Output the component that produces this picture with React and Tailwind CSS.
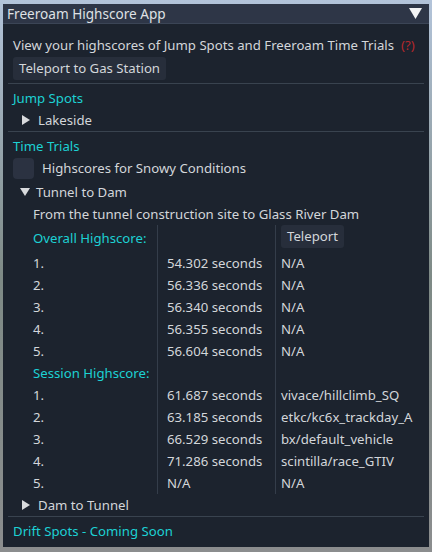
const overall = [
  ['1.', '54.302 seconds', 'N/A'],
  ['2.', '56.336 seconds', 'N/A'],
  ['3.', '56.340 seconds', 'N/A'],
  ['4.', '56.355 seconds', 'N/A'],
  ['5.', '56.604 seconds', 'N/A'],
];

const session = [
  ['1.', '61.687 seconds', 'vivace/hillclimb_SQ'],
  ['2.', '63.185 seconds', 'etkc/kc6x_trackday_A'],
  ['3.', '66.529 seconds', 'bx/default_vehicle'],
  ['4.', '71.286 seconds', 'scintilla/race_GTIV'],
  ['5.', 'N/A', 'N/A'],
];

// the extra top padding nudges the glyphs 1px down so they sit centred like the game's font
function T({ className = '', children }) {
  return <span className={'pt-[2px] ' + className}>{children}</span>;
}

function Arrow({ open }) {
  return (
    <svg width="10" height="10" viewBox="0 0 10 10" className="shrink-0">
      {open ? <polygon points="0,1 10,1 5,9" fill="#d8dadd" /> : <polygon points="1,0 9,5 1,10" fill="#d8dadd" />}
    </svg>
  );
}

function Separator() {
  return <div className="h-px bg-[#39434f] -mx-[5px]" />;
}

function Row({ cells }) {
  return (
    <>
      <div className="h-[22px] flex items-center">{cells[0]}</div>
      <div className="h-[22px] flex items-center border-l border-[#343d4a] pl-[9px]">{cells[1]}</div>
      <div className="h-[22px] flex items-center border-l border-[#343d4a] pl-[5px]">{cells[2]}</div>
    </>
  );
}

export default function App() {
  return (
    <div
      className="w-[432px] h-[552px] pt-[4px] pl-[3px] bg-gradient-to-b from-[#b3c4da] via-[#7e8a86] to-[#8b8d8e]"
      style={{ fontFamily: '"Noto Sans", "Open Sans", sans-serif' }}
    >
      <div className="w-[426px] h-[543px] bg-[#1c232e] text-[13.2px] text-[#d3d6da] leading-none whitespace-nowrap flex flex-col">
        {/* title bar */}
        <div className="h-[20px] bg-[#2e3647] border-b border-[#3b4556] flex items-center justify-between pl-[4px] pr-[7px]">
          <span className="text-[#dfe1e4] text-[13.6px]">Freeroam Highscore App</span>
          <svg width="13" height="11" viewBox="0 0 13 11">
            <polygon points="0,0 13,0 6.5,11" fill="#f2f3f4" />
          </svg>
        </div>

        <div className="px-[10px] pt-[10px] flex flex-col">
          <div className="h-[22px] flex items-center">
            <T>View your highscores of Jump Spots and Freeroam Time Trials</T>
            <T className="ml-[7px] text-[#b3282c]">(?)</T>
          </div>
          <div className="h-[23px] mt-[1px] flex">
            <button className="h-full px-[6px] rounded-[3px] bg-[#272e3b] text-[#d3d6da]">Teleport to Gas Station</button>
          </div>
          <div className="mt-[3px]">
            <Separator />
          </div>

          <div className="h-[22px] mt-[3px] flex items-center text-[#1dd1d4]">
            <T>Jump Spots</T>
          </div>
          <div className="h-[22px] flex items-center gap-[7px] pl-[8px]">
            <Arrow />
            <T>Lakeside</T>
          </div>
          <Separator />

          <div className="h-[22px] mt-[3px] flex items-center text-[#1dd1d4]">
            <T>Time Trials</T>
          </div>
          <div className="h-[22px] flex items-center gap-[8px]">
            <div className="w-[21px] h-[21px] rounded-[4px] bg-[#2b3241]" />
            <T>Highscores for Snowy Conditions</T>
          </div>
          <div className="h-[22px] mt-[2px] flex items-center gap-[6px] pl-[7px]">
            <Arrow open />
            <T>Tunnel to Dam</T>
          </div>
          <div className="h-[22px] flex items-center pl-[20px]">
            <T>From the tunnel construction site to Glass River Dam</T>
          </div>

          <div className="pl-[20px] grid grid-cols-[124px_118px_1fr]">
            <div className="h-[27px] pt-[7px] text-[#1dd1d4]">Overall Highscore:</div>
            <div className="h-[27px] border-l border-[#343d4a]" />
            <div className="h-[27px] border-l border-[#343d4a] pl-[5px]">
              <button className="h-[23px] px-[6px] rounded-[3px] bg-[#272e3b] text-[#d3d6da]">Teleport</button>
            </div>
            {overall.map((r) => (
              <Row key={'o' + r[0]} cells={r.map((c) => <T>{c}</T>)} />
            ))}
            <Row cells={[<T className="text-[#1dd1d4]">Session Highscore:</T>, '', '']} />
            {session.map((r) => (
              <Row key={'s' + r[0]} cells={r.map((c) => <T>{c}</T>)} />
            ))}
          </div>

          <div className="h-[22px] flex items-center gap-[7px] pl-[8px]">
            <Arrow />
            <T>Dam to Tunnel</T>
          </div>
          <Separator />
          <div className="h-[22px] mt-[3px] flex items-center text-[#1dd1d4]">
            <T>Drift Spots - Coming Soon</T>
          </div>
        </div>
      </div>
    </div>
  );
}
